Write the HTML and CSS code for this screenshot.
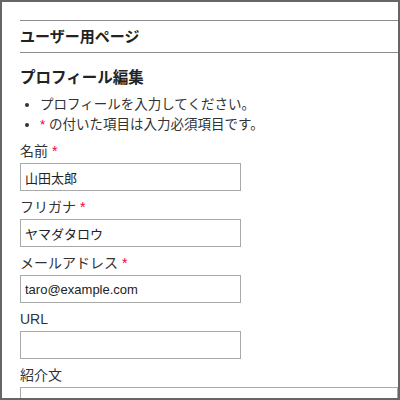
FILE: index.html
```html
<!DOCTYPE html>
<html lang="ja">
<head>
<meta charset="utf-8">
<title>ユーザー用ページ</title>
<link rel="stylesheet" href="styles.css">
</head>
<body>
<div class="frame">
  <h1 class="page-title">ユーザー用ページ</h1>
  <h2 class="section-title">プロフィール編集</h2>
  <ul class="notes">
    <li>プロフィールを入力してください。</li>
    <li><span class="req">*</span> の付いた項目は入力必須項目です。</li>
  </ul>
  <form class="form">
    <div class="field">
      <label class="label">名前 <span class="req">*</span></label>
      <input class="input" type="text" value="山田太郎">
    </div>
    <div class="field">
      <label class="label">フリガナ <span class="req">*</span></label>
      <input class="input" type="text" value="ヤマダタロウ">
    </div>
    <div class="field">
      <label class="label">メールアドレス <span class="req">*</span></label>
      <input class="input" type="text" value="taro@example.com">
    </div>
    <div class="field">
      <label class="label">URL</label>
      <input class="input" type="text" value="">
    </div>
    <div class="field">
      <label class="label">紹介文</label>
      <textarea class="textarea"></textarea>
    </div>
  </form>
</div>
</body>
</html>
```
FILE: styles.css
```css
html, body {
  margin: 0;
  padding: 0;
  background: #fff;
}
body {
  font-family: "Liberation Sans", "Noto Sans CJK JP", sans-serif;
  color: #333;
}
.frame {
  box-sizing: border-box;
  width: 400px;
  height: 400px;
  border: 2px solid #666;
  padding: 18px 0 0 18px;
  overflow: hidden;
}
.page-title {
  margin: 0;
  border-top: 1px solid #8c8c8c;
  border-bottom: 1px solid #8c8c8c;
  font-size: 15px;
  line-height: 21px;
  padding: 5px 0;
  font-weight: bold;
  color: #222;
}
.section-title {
  margin: 14px 0 0 0;
  font-size: 15.5px;
  line-height: 22px;
  height: 22px;
  font-weight: bold;
  color: #222;
}
.notes {
  margin: 6px 0 0 0;
  padding-left: 20px;
  font-size: 13.5px;
  line-height: 20px;
  color: #333;
}
.notes li {
  height: 20px;
}
.req {
  color: #ee0033;
}
.form {
  margin: 6px 0 0 0;
  display: flex;
  flex-direction: column;
}
.field {
  display: flex;
  flex-direction: column;
  align-items: flex-start;
  height: 56px;
}
.label {
  font-size: 14px;
  line-height: 20px;
  height: 20px;
  margin-bottom: 2px;
  color: #333;
}
.input {
  box-sizing: border-box;
  width: 221px;
  height: 28px;
  margin: 0;
  border: 1px solid #a9a9a9;
  padding: 0 4px;
  font-family: "Liberation Sans", "Noto Sans CJK JP", sans-serif;
  font-size: 13px;
  color: #222;
  background: #fff;
}
.textarea {
  box-sizing: border-box;
  width: 100%;
  height: 80px;
  margin: 0;
  border: 1px solid #a9a9a9;
  padding: 4px;
  resize: none;
  font-family: "Liberation Sans", "Noto Sans CJK JP", sans-serif;
  font-size: 13px;
}
```
